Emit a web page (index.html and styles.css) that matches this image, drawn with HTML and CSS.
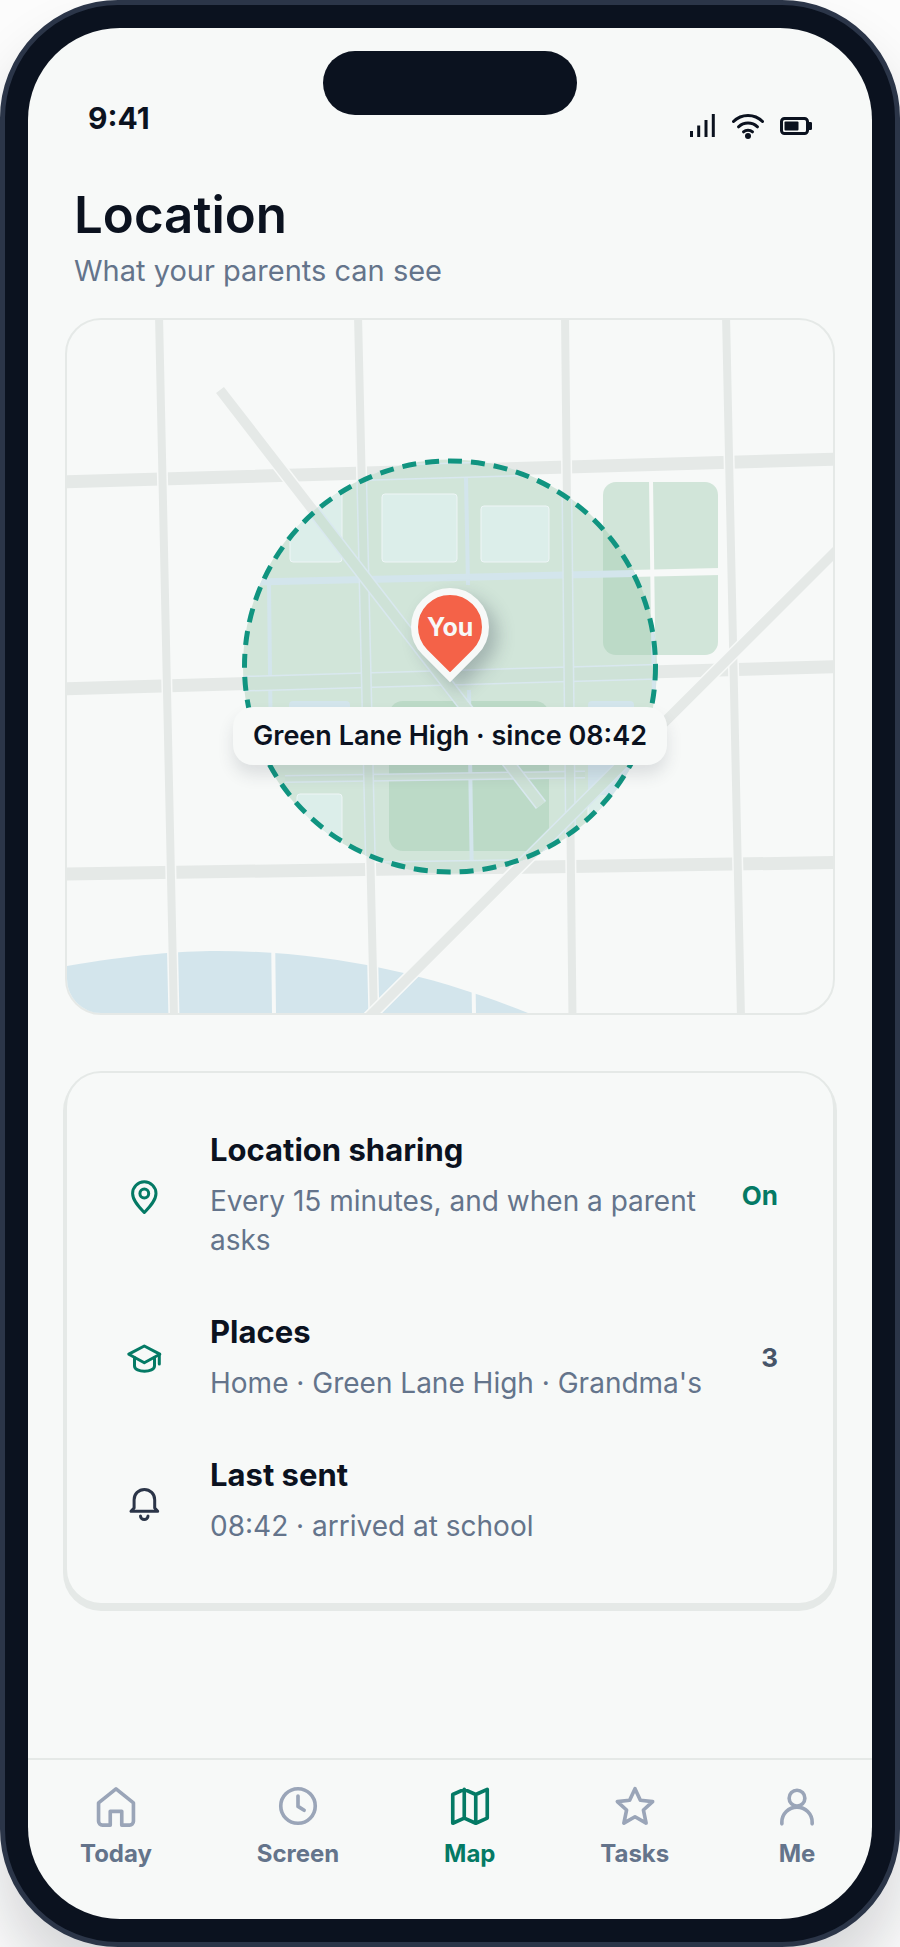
FILE: index.html
```html
<!DOCTYPE html>
<html lang="en">
<head>
  <meta charset="UTF-8"/>
  <meta name="viewport" content="width=device-width, initial-scale=1"/>
  <title>Location</title>
  <link rel="stylesheet" href="styles.css">
</head>
<body>

  <div class="phone">
    <div class="screen">
      <div class="island"></div>

      <div class="status-bar">
        <span class="time">9:41</span>
        <div class="status-icons">
          <svg width="26" height="30" viewBox="0 0 26 30" aria-hidden="true">
            <path d="M1.500 21v6M8.700 15.500v11.500M16 10v17M23.300 4v23" stroke="currentColor" stroke-width="3" fill="none"/>
          </svg>
          <svg width="32" height="30" viewBox="0 0 32 30" aria-hidden="true">
            <g fill="none" stroke="currentColor" stroke-width="3" stroke-linecap="round">
              <path d="M1.500 11.500C9.500 3.500 22.500 3.500 30.500 11.500"/>
              <path d="M6.500 16.800C12 11.800 20 11.800 25.500 16.800"/>
              <path d="M11.500 21.800C14 19.600 18 19.600 20.500 21.800"/>
            </g>
            <circle cx="16" cy="26" r="3" fill="currentColor"/>
          </svg>
          <svg width="32" height="30" viewBox="0 0 32 30" aria-hidden="true">
            <rect x="1.500" y="8.500" width="26" height="15" rx="3" fill="none" stroke="currentColor" stroke-width="3"/>
            <rect x="4.500" y="11.500" width="14" height="9" rx="1" fill="currentColor"/>
            <path d="M28.500 12h2q1.500 0 1.500 1v6q0 1-1.500 1h-2z" fill="currentColor"/>
          </svg>
        </div>
      </div>

      <main>
        <header class="page-head">
          <h1>Location</h1>
          <p>What your parents can see</p>
        </header>

        <div class="map">
          <svg class="map-art" viewBox="67 320 766 693" role="img" aria-label="Map around Green Lane High">
            <defs>
              <clipPath id="zone"><circle cx="450" cy="666.500" r="207"/></clipPath>

              <g id="streets" fill="none">
                <!-- parks and water -->
                <rect class="park" x="603" y="482" width="115" height="173" rx="13"/>
                <rect class="park" x="389" y="701" width="160" height="150" rx="14"/>
                <path class="water" d="M67 966C130 955 180 951 217 951C330 951 430 974 528 1013H67Z"/>

                <!-- side streets -->
                <path class="minor" stroke-width="7" d="M255 582L720 571.500"/>
                <path class="minor" stroke-width="4" d="M269 585L274 1013M466 478L468 585M469 690L474 1013M651 480L654 700"/>

                <!-- buildings -->
                <rect class="building" x="290" y="480" width="52" height="82" rx="3"/>
                <rect class="building" x="382" y="494" width="75" height="68" rx="3"/>
                <rect class="building" x="481" y="506" width="68" height="56" rx="3"/>
                <rect class="building" x="297" y="794" width="45" height="62" rx="3"/>
                <rect class="building" x="588" y="790" width="46" height="40" rx="3"/>
                <rect class="yard" x="289" y="701" width="61" height="50" rx="4"/>
                <rect class="yard" x="588" y="701" width="46" height="94" rx="4"/>

                <!-- main roads: casing first, road on top -->
                <path class="casing" stroke-width="8" d="M285 779L585 774.500"/>
                <path class="road" stroke-width="5" d="M285 779L585 774.500"/>

                <path class="casing" stroke-width="16" d="M60 482L840 459M60 689L840 666.500M60 874L840 862.500"/>
                <path class="road" stroke-width="13" d="M60 482L840 459M60 689L840 666.500M60 874L840 862.500"/>

                <path class="casing" stroke-width="11" d="M159 315L174 1018M358 315L374 1018M565 315L572.500 1018M726 315L741 1018"/>
                <path class="road" stroke-width="8" d="M159 315L174 1018M358 315L374 1018M565 315L572.500 1018M726 315L741 1018"/>

                <path class="casing" stroke-width="13" d="M220 390L541 805M840 547L368 1018"/>
                <path class="road" stroke-width="10" d="M220 390L541 805M840 547L368 1018"/>
              </g>
            </defs>

            <use href="#streets" class="outside"/>
            <g clip-path="url(#zone)">
              <rect class="zone-fill" x="240" y="455" width="420" height="420"/>
              <use href="#streets" class="inside"/>
            </g>
            <circle class="zone-ring" cx="450" cy="666.500" r="205.500"/>
          </svg>

          <div class="pin"><span>You</span></div>
          <div class="place-label">Green Lane High · since 08:42</div>
        </div>

        <ul class="card">
          <li class="row">
            <svg class="row-icon" viewBox="0 0 42 42" aria-hidden="true">
              <path d="M21.300 38.500C16 33 9.600 26.500 9.600 19.500a11.700 11.700 0 0 1 23.400 0c0 7-6.400 13.500-11.700 19z"/>
              <circle cx="21.300" cy="19.500" r="4.400"/>
            </svg>
            <div class="row-text">
              <h2>Location sharing</h2>
              <p>Every 15 minutes, and when a parent asks</p>
            </div>
            <span class="value value-on">On</span>
          </li>
          <li class="row">
            <svg class="row-icon" viewBox="0 0 42 42" aria-hidden="true">
              <path d="M21.300 9L5.800 17.200 21.300 25.700 36.800 17.200z"/>
              <path d="M11.500 20.500v8.500c0 7 20 7 20 0v-8.500"/>
              <path d="M36.300 17.500v9.500"/>
            </svg>
            <div class="row-text">
              <h2>Places</h2>
              <p>Home · Green Lane High · Grandma's</p>
            </div>
            <span class="value">3</span>
          </li>
          <li class="row">
            <svg class="row-icon row-icon-dark" viewBox="0 0 42 42" aria-hidden="true">
              <path d="M8 31.300H34.700L31.700 28V19.700a10.300 10.300 0 0 0-20.600 0V28z"/>
              <path d="M17.500 36c0 4.500 7.500 4.500 7.500 0"/>
            </svg>
            <div class="row-text">
              <h2>Last sent</h2>
              <p>08:42 · arrived at school</p>
            </div>
          </li>
        </ul>
      </main>

      <nav class="tabs">
        <a href="#today">
          <svg viewBox="0 0 24 24" aria-hidden="true"><path d="M12 3.100L2.900 10.400V20a2 2 0 0 0 2 2H9v-7.200h6V22h4.100a2 2 0 0 0 2-2v-9.600z"/></svg>
          Today
        </a>
        <a href="#screen">
          <svg viewBox="0 0 24 24" aria-hidden="true"><circle cx="12" cy="12" r="9"/><path d="M12 6.800V12.200l3.200 2"/></svg>
          Screen
        </a>
        <a href="#map" class="active" aria-current="page">
          <svg viewBox="0 0 24 24" aria-hidden="true"><path d="M9 3.300L3 6v15l6-2.700 6 2.700 6-2.700v-15L15 6zM9 3.300v15M15 6v15"/></svg>
          Map
        </a>
        <a href="#tasks">
          <svg viewBox="0 0 24 24" aria-hidden="true"><path d="M12 3l2.800 6 6.400.7-4.800 4.400 1.400 6.800L12 17.600l-5.800 3.300 1.400-6.800L2.800 9.700 9.200 9z"/></svg>
          Tasks
        </a>
        <a href="#me">
          <svg viewBox="0 0 24 24" aria-hidden="true"><circle cx="12" cy="7.900" r="4.100"/><path d="M4.100 21.300v-.8a7.900 7.900 0 0 1 15.800 0v.8"/></svg>
          Me
        </a>
      </nav>
    </div>
  </div>

</body>
</html>
```
FILE: styles.css
```css
:root {
  --ink: #0b121f;
  --slate: #64748b;
  --green: #047a65;
  --surface: #f7f9f8;
  --line: #e5e9e7;
}

* {
  box-sizing: border-box;
}

body {
  margin: 0;
  background-color: #fcfcfc;
  color: var(--ink);
  font-family: Inter, "Liberation Sans", sans-serif;
  overflow-x: hidden;
}

h1, h2, p, ul {
  margin: 0;
  padding: 0;
}

/* === DEVICE === */
.phone {
  display: flex;
  min-height: 100vh;
  padding: 23px;
  border: 5px solid #2b3548;
  border-radius: 118px;
  background-color: var(--ink);
  box-shadow: 0 40px 60px rgba(11, 18, 31, 0.16);
}

.screen {
  position: relative;
  flex: 1;
  display: flex;
  flex-direction: column;
  min-width: 0;
  border-radius: 92px;
  background-color: var(--surface);
  overflow: hidden;
}

.island {
  position: absolute;
  top: 23px;
  left: 50%;
  width: 254px;
  height: 64px;
  border-radius: 32px;
  background-color: var(--ink);
  transform: translateX(-50%);
}

.status-bar {
  display: flex;
  justify-content: space-between;
  align-items: flex-end;
  padding: 68px 60px 0;
}

.time {
  font-size: 30px;
  font-weight: 700;
  line-height: 44px;
}

.status-icons {
  display: flex;
  gap: 16px;
}

.status-icons svg {
  display: block;
}

/* === CONTENT === */
main {
  padding: 45px 37px 60px;
}

.page-head {
  padding: 0 9px 27px;
}

.page-head h1 {
  font-size: 51px;
  font-weight: 600;
  line-height: 60px;
}

.page-head p {
  margin-top: 6px;
  color: var(--slate);
  font-size: 29px;
  line-height: 40px;
}

.map {
  position: relative;
  border: 2px solid var(--line);
  border-radius: 36px;
  overflow: hidden;
}

.map-art {
  display: block;
  width: 100%;
  height: auto;
}

.outside {
  --road: #e5e9e7;
  --casing: #f7f9f8;
  --minor: #f7f9f8;
  --park: #d1e5d9;
  --water: #d3e5ec;
  --building: #f7f9f8;
  --building-edge: #f7f9f8;
  --yard: #f7f9f8;
}

.inside {
  --road: #cee2d7;
  --casing: #d9e8ef;
  --minor: #d3e5ec;
  --park: #bcdac7;
  --water: #d3e5ec;
  --building: #dceeea;
  --building-edge: #eef5f6;
  --yard: #d3e5ec;
}

.road { stroke: var(--road); }
.casing { stroke: var(--casing); }
.minor { stroke: var(--minor); }
.park { fill: var(--park); }
.water { fill: var(--water); }
.yard { fill: var(--yard); }
.building { fill: var(--building); stroke: var(--building-edge); }
.zone-fill { fill: #d1e5d9; }

.zone-ring {
  fill: none;
  stroke: #109480;
  stroke-width: 5;
  stroke-dasharray: 14 9;
}

.pin {
  position: absolute;
  top: 44.3%;
  left: 50%;
  display: flex;
  justify-content: center;
  align-items: center;
  width: 78px;
  height: 78px;
  border: 7px solid var(--surface);
  border-radius: 50% 50% 50% 0;
  background-color: #f46248;
  box-shadow: 0 12px 18px rgba(43, 53, 72, 0.28);
  transform: translate(-50%, -50%) rotate(-45deg);
}

.pin span {
  color: var(--surface);
  font-size: 25px;
  font-weight: 700;
  transform: rotate(45deg);
}

.place-label {
  position: absolute;
  top: 60%;
  left: 50%;
  padding: 10px 20px;
  border-radius: 20px;
  background-color: var(--surface);
  box-shadow: 0 10px 16px rgba(43, 53, 72, 0.13);
  font-size: 27px;
  font-weight: 600;
  line-height: 38px;
  white-space: nowrap;
  transform: translate(-50%, -50%);
}

/* === DETAILS CARD === */
.card {
  margin-top: 56px;
  padding: 31px 55px 31px 56px;
  border: 2px solid var(--line);
  border-radius: 36px;
  box-shadow: 0 4px 0 2px var(--line);
  background-color: var(--surface);
  list-style: none;
}

.row {
  display: flex;
  align-items: center;
  gap: 45px;
  padding: 26px 0;
}

.row-icon {
  flex: none;
  width: 42px;
  height: 42px;
  fill: none;
  stroke: var(--green);
  stroke-width: 3;
  stroke-linecap: round;
  stroke-linejoin: round;
}

.row-icon-dark {
  stroke: #2b3548;
}

.row-text {
  flex: 1;
  min-width: 0;
}

.row-text h2 {
  font-size: 31px;
  font-weight: 700;
  line-height: 39px;
}

.row-text p {
  margin-top: 13px;
  color: var(--slate);
  font-size: 28px;
  line-height: 39px;
}

.value {
  color: #475569;
  font-size: 26px;
  font-weight: 700;
}

.value-on {
  color: var(--green);
}

/* === TAB BAR === */
.tabs {
  display: flex;
  justify-content: space-between;
  margin-top: auto;
  padding: 23px 52px 49px;
  border-top: 2px solid var(--line);
}

.tabs a {
  display: flex;
  flex-direction: column;
  align-items: center;
  gap: 9px;
  color: var(--slate);
  font-size: 24px;
  font-weight: 700;
  line-height: 32px;
  text-decoration: none;
}

.tabs svg {
  width: 46px;
  height: 46px;
  fill: none;
  stroke: #9aa5b8;
  stroke-width: 1.9;
  stroke-linecap: round;
  stroke-linejoin: round;
}

.tabs .active {
  color: var(--green);
}

.tabs .active svg {
  stroke: var(--green);
}
```
